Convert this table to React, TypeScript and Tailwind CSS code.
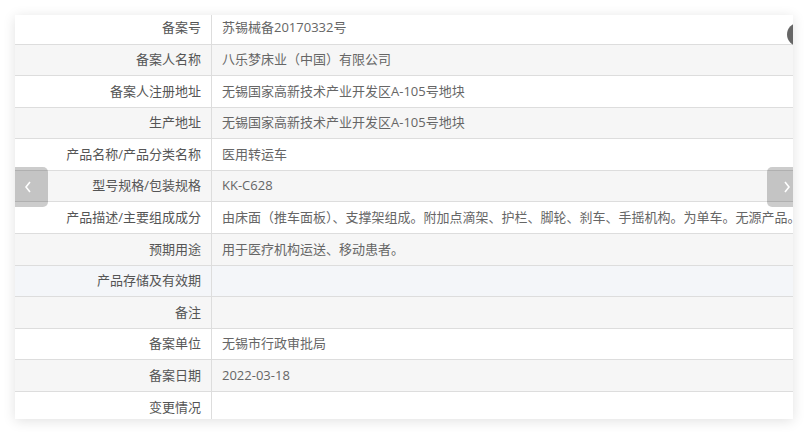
import React from 'react';

const rows: { label: string; value: string; tint?: string }[] = [
  { label: '备案号', value: '苏锡械备20170332号' },
  { label: '备案人名称', value: '八乐梦床业（中国）有限公司' },
  { label: '备案人注册地址', value: '无锡国家高新技术产业开发区A-105号地块' },
  { label: '生产地址', value: '无锡国家高新技术产业开发区A-105号地块' },
  { label: '产品名称/产品分类名称', value: '医用转运车' },
  { label: '型号规格/包装规格', value: 'KK-C628' },
  {
    label: '产品描述/主要组成成分',
    value: '由床面（推车面板）、支撑架组成。附加点滴架、护栏、脚轮、刹车、手摇机构。为单车。无源产品。',
  },
  { label: '预期用途', value: '用于医疗机构运送、移动患者。' },
  { label: '产品存储及有效期', value: '', tint: 'hover' },
  { label: '备注', value: '' },
  { label: '备案单位', value: '无锡市行政审批局' },
  { label: '备案日期', value: '2022-03-18' },
  { label: '变更情况', value: '' },
];

export default function App() {
  return (
    <div
      className="w-[808px] h-[434px] bg-white p-[15px]"
      style={{ fontFamily: '"Open Sans", "Noto Sans CJK SC", sans-serif' }}
    >
      <div className="relative w-[778px] h-[404px] overflow-hidden bg-white shadow-[0_2px_12px_rgba(0,0,0,0.12)]">
        <div className="-mt-[2.1px] flex flex-col">
          {rows.map((r, i) => {
            const bg = r.tint === 'hover' ? 'bg-[#f4f6f9]' : i % 2 === 1 ? 'bg-[#f6f6f6]' : 'bg-white';
            return (
              <div key={r.label} className={`flex h-[31.6px] shrink-0 border-b border-[#dddddd] ${bg}`}>
                <div className="w-[197px] shrink-0 border-r border-[#dddddd] flex items-center justify-end pr-[10px] text-[13px] text-[#555]">
                  {r.label}
                </div>
                <div className="flex-1 flex items-center pl-[10px] text-[13px] text-[#666] whitespace-nowrap overflow-hidden">
                  {r.value}
                </div>
              </div>
            );
          })}
        </div>

        {/* slider arrows, partly hidden past the card edges */}
        <button className="absolute -left-[7px] top-[152px] w-[40px] h-[40px] rounded-[5px] bg-black/20 flex items-center justify-center text-white">
          <svg width="10" height="16" viewBox="0 0 10 16" fill="none" stroke="currentColor" strokeWidth="1.6">
            <path d="M7 3 L3 8 L7 13" />
          </svg>
        </button>
        <button className="absolute -right-[14px] top-[152px] w-[40px] h-[40px] rounded-[5px] bg-black/20 flex items-center justify-center text-white">
          <svg width="10" height="16" viewBox="0 0 10 16" fill="none" stroke="currentColor" strokeWidth="1.6">
            <path d="M3 3 L7 8 L3 13" />
          </svg>
        </button>
        <div className="absolute -right-[17px] top-[8px] w-[23px] h-[23px] rounded-full bg-[#666]" />
      </div>
    </div>
  );
}
